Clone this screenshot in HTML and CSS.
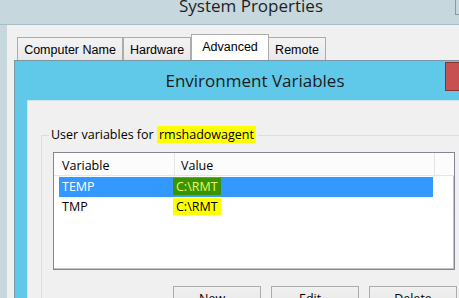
FILE: index.html
```html
<!DOCTYPE html>
<html lang="en">
<head>
  <meta charset="UTF-8">
  <meta name="viewport" content="width=device-width, initial-scale=1">
  <title>System Properties</title>
  <link rel="stylesheet" href="styles.css">
</head>
<body>

  <!-- VENTANA: SYSTEM PROPERTIES (inactiva) -->
  <div class="sys-frame">
    <div class="sys-title">
      <span class="sys-title-text">System Properties</span>
      <div class="sys-close"></div>
    </div>

    <div class="sys-client">
      <div class="tabs">
        <div class="tab tab-computer">Computer Name</div>
        <div class="tab tab-hardware">Hardware</div>
        <div class="tab tab-advanced active">Advanced</div>
        <div class="tab tab-remote">Remote</div>
      </div>

      <!-- VENTANA: ENVIRONMENT VARIABLES (activa) -->
      <div class="env-window">
        <div class="env-title">
          Environment Variables
          <div class="env-close"></div>
        </div>
        <div class="env-body">
          <fieldset class="group">
            <legend>User variables for <span class="mark">rmshadowagent</span></legend>

            <div class="list">
              <div class="list-head">
                <div class="head-cell cell-var">Variable</div>
                <div class="head-cell cell-val">Value</div>
                <div class="head-cell cell-rest"></div>
              </div>
              <div class="row selected">
                <div class="cell-var">TEMP</div>
                <div class="cell-val"><span class="mark">C:\RMT</span></div>
              </div>
              <div class="row">
                <div class="cell-var">TMP</div>
                <div class="cell-val"><span class="mark">C:\RMT</span></div>
              </div>
            </div>

            <div class="buttons">
              <button class="btn">New...</button>
              <button class="btn">Edit...</button>
              <button class="btn">Delete</button>
            </div>
          </fieldset>
        </div>
      </div>
    </div>
  </div>

</body>
</html>
```

FILE: styles.css
```css
/* RESET Y GENERALES */
* { box-sizing: border-box; margin: 0; padding: 0; }
html, body { height: 100%; overflow: hidden; }
body {
  background: #c6d7dd; color: #000;
  font-family: "Open Sans", "Noto Sans", sans-serif; font-size: 12.5px;
}

/* SYSTEM PROPERTIES: MARCO Y TITULO */
.sys-frame { width: 502px; }
.sys-title {
  position: relative; height: 25px;
  border-bottom: 1px solid #a9bcc3;
  text-align: center; font-size: 17px; line-height: 18px; color: #1e1e1e;
}
.sys-title-text { position: relative; top: -3px; }
.sys-close {
  position: absolute; left: 455px; top: -12px;
  width: 40px; height: 27px; border: 1px solid #8a9aa1;
}
.sys-client { margin-left: 7px; background: #f0f0f0; height: 300px; padding-top: 10px; }

/* PESTAÑAS */
.tabs { display: flex; align-items: flex-end; height: 25px; padding-left: 10px; }
.tab {
  height: 23px; padding-top: 3px;
  border: 1px solid #acacac; border-bottom: none;
  background: linear-gradient(to bottom, #f3f3f3, #e9e9e9);
  font-family: "Liberation Sans", Arial, sans-serif; font-size: 12.5px; line-height: 18px;
  text-align: center; color: #000;
}
.tab-computer { width: 106px; }
.tab-hardware { width: 68px; }
.tab-advanced { width: 78px; }
.tab-remote { width: 58px; margin-left: -1px; }
.tab.active { height: 26px; background: #fff; position: relative; z-index: 1; }

/* ENVIRONMENT VARIABLES */
.env-window {
  position: relative; z-index: 2;
  margin-left: 7px; width: 482px;
  border: 1px solid #7b97a3; background: #60c9ea;
  padding: 0 12px 12px 12px;
}
.env-title {
  position: relative; height: 39px; line-height: 39px;
  text-align: center; font-size: 17px; color: #1b1b1b;
}
.env-close {
  position: absolute; right: -7px; top: 1px;
  width: 45px; height: 29px;
  background: #c75050; border: 1px solid #8b3030;
}
.env-body {
  background: #f0f0f0; border: 1px solid #cfe3ea;
  height: 300px; padding: 25px 0 0 13px;
}

/* GRUPO */
.group { width: 430px; border: 1px solid #d5dfe5; padding: 8px 0 0 11px; }
.group legend { line-height: 18px; padding: 0 2px; margin-left: -4px; }
.mark { background: #ffff00; padding: 0 2px; }

/* LISTA */
.list {
  width: 402px; height: 118px;
  background: #fff; border: 1px solid #828790;
  box-shadow: inset -1px -1px 0 #c4c4c4;
}
.list-head { display: flex; height: 23px; background: #fcfcfc; border-bottom: 1px solid #e5e5e5; }
.head-cell { height: 22px; padding-top: 4px; line-height: 18px; border-right: 1px solid #e5e5e5; }
.list-head .cell-var { width: 121px; padding-left: 8px; }
.list-head .cell-val { width: 260px; padding-left: 6px; }
.list-head .cell-rest { flex: 1; border-right: none; }

.row { display: flex; width: 374px; height: 20px; margin-left: 5px; line-height: 20px; }
.list-head + .row { margin-top: 1px; }
.row .cell-var { width: 114px; padding-left: 3px; }
.row .cell-val { flex: 1; }
.row .cell-val .mark { padding: 0 3px; }
.row.selected { background: #3399ff; color: #fff; }
.row.selected .mark { background: #3a9400; color: #e6f76a; }

/* BOTONES */
.buttons { display: flex; gap: 10px; margin: 16px 0 0 120px; }
.btn {
  width: 88px; height: 28px; padding-bottom: 2px;
  border: 1px solid #acacac;
  background: linear-gradient(to bottom, #f0f0f0, #e5e5e5);
  font-family: "Open Sans", "Noto Sans", sans-serif; font-size: 12.5px; line-height: 22px;
}
```
